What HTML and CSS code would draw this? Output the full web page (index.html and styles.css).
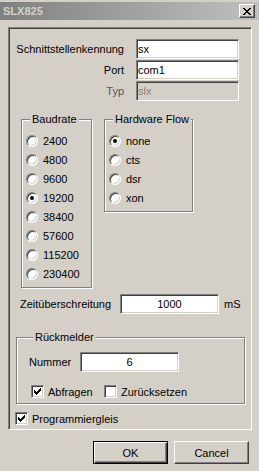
FILE: index.html
```html
<!DOCTYPE html>
<html lang="de">
<head>
    <meta charset="UTF-8">
    <title>SLX825</title>
    <link rel="stylesheet" href="styles.css">
</head>
<body>
    <div class="titlebar">
        <span class="title">SLX825</span>
        <span class="close">
            <svg width="8" height="7" viewBox="0 0 8 7" shape-rendering="crispEdges"><path d="M0 0h2v1h-2z M6 0h2v1h-2z M1 1h2v1h-2z M5 1h2v1h-2z M2 2h4v1h-4z M3 3h2v1h-2z M2 4h4v1h-4z M1 5h2v1h-2z M5 5h2v1h-2z M0 6h2v1h-2z M6 6h2v1h-2z" fill="#000"/></svg>
        </span>
    </div>

    <div class="panel">
        <div class="fields">
            <label class="lbl">Schnittstellenkennung</label>
            <input class="edit" type="text" value="sx">
            <label class="lbl">Port</label>
            <input class="edit" type="text" value="com1">
            <label class="lbl disabled">Typ</label>
            <input class="edit" type="text" value="slx" disabled>
        </div>

        <div class="groups">
            <fieldset class="group baud">
                <legend>Baudrate</legend>
                <div class="opt"><span class="radio"></span>2400</div>
                <div class="opt"><span class="radio"></span>4800</div>
                <div class="opt"><span class="radio"></span>9600</div>
                <div class="opt"><span class="radio on"></span>19200</div>
                <div class="opt"><span class="radio"></span>38400</div>
                <div class="opt"><span class="radio"></span>57600</div>
                <div class="opt"><span class="radio"></span>115200</div>
                <div class="opt"><span class="radio"></span>230400</div>
            </fieldset>
            <fieldset class="group flow">
                <legend>Hardware Flow</legend>
                <div class="opt"><span class="radio on"></span>none</div>
                <div class="opt"><span class="radio"></span>cts</div>
                <div class="opt"><span class="radio"></span>dsr</div>
                <div class="opt"><span class="radio"></span>xon</div>
            </fieldset>
        </div>

        <div class="timeout">
            <span class="timeout-lbl">Zeitüberschreitung</span>
            <input class="edit num" type="text" value="1000">
            <span class="unit">mS</span>
        </div>

        <fieldset class="group rm">
            <legend>Rückmelder</legend>
            <div class="rm-row">
                <span class="rm-lbl">Nummer</span>
                <input class="edit num" type="text" value="6">
            </div>
            <div class="rm-checks">
                <label class="check first"><span class="box on"><svg width="7" height="7" viewBox="0 0 7 7" shape-rendering="crispEdges"><path d="M6 0h1v1h-1z M5 1h2v1h-2z M0 2h1v1h-1z M4 2h3v1h-3z M0 3h2v1h-2z M3 3h3v1h-3z M0 4h5v1h-5z M1 5h3v1h-3z M2 6h1v1h-1z" fill="#000"/></svg></span>Abfragen</label>
                <label class="check"><span class="box"></span>Zurücksetzen</label>
            </div>
        </fieldset>

        <label class="check prog"><span class="box on"><svg width="7" height="7" viewBox="0 0 7 7" shape-rendering="crispEdges"><path d="M6 0h1v1h-1z M5 1h2v1h-2z M0 2h1v1h-1z M4 2h3v1h-3z M0 3h2v1h-2z M3 3h3v1h-3z M0 4h5v1h-5z M1 5h3v1h-3z M2 6h1v1h-1z" fill="#000"/></svg></span>Programmiergleis</label>
    </div>

    <div class="buttons">
        <button class="btn default">OK</button>
        <button class="btn">Cancel</button>
    </div>
</body>
</html>
```

FILE: styles.css
```css
* {
    box-sizing: border-box;
}

html, body {
    margin: 0;
    background-color: #d4d0c8;
}

body {
    width: 259px;
    height: 471px;
    overflow: hidden;
    font-family: "Liberation Sans", Arial, sans-serif;
    font-size: 11px;
    color: #000;
}

/* title bar */
.titlebar {
    display: flex;
    align-items: flex-start;
    height: 18px;
    margin-top: 2px;
    background: linear-gradient(to right, #808080, #c0c0c0);
}

.title {
    font-weight: bold;
    color: #d4d0c8;
    padding-left: 3px;
    line-height: 18px;
}

.close {
    display: flex;
    align-items: center;
    justify-content: center;
    width: 16px;
    height: 14px;
    margin: 2px 4px 0 auto;
    background-color: #d4d0c8;
    border: 1px solid;
    border-color: #fff #404040 #404040 #fff;
    box-shadow: inset -1px -1px #808080;
}

/* sunken panel */
.panel {
    height: 403px;
    margin: 7px 7px 0 8px;
    padding-top: 11px;
    border: 1px solid;
    border-color: #808080 #fff #fff #808080;
    box-shadow: inset 1px 1px #404040, inset -1px -1px #d4d0c8;
}

.fields {
    display: grid;
    grid-template-columns: 115px 103px;
    grid-auto-rows: 20px;
    column-gap: 12px;
    row-gap: 1px;
    align-items: center;
}

.lbl {
    text-align: right;
}

.lbl.disabled {
    color: #555;
}

.edit {
    height: 20px;
    margin: 0;
    padding: 0 1px;
    font: inherit;
    color: #000;
    background-color: #fff;
    border: 1px solid;
    border-color: #808080 #fff #fff #808080;
    box-shadow: inset 1px 1px #404040, inset -1px -1px #d4d0c8;
    outline: none;
}

.edit:disabled {
    background-color: #d4d0c8;
    color: #808080;
}

.edit.num {
    width: 99px;
    text-align: center;
}

/* group boxes */
.groups {
    display: flex;
    align-items: flex-start;
    gap: 12px;
    margin: 12px 0 0 12px;
}

.group {
    margin: 0;
    min-width: 0;
    border: 1px solid #808080;
    box-shadow: inset 1px 1px #fff, 1px 1px #fff;
}

.group legend {
    margin-left: 4px;
    padding: 0 2px;
    line-height: 13px;
    background-color: #d4d0c8;
}

.baud {
    width: 71px;
    padding: 5px 0 4px 4px;
}

.flow {
    width: 89px;
    padding: 5px 0 4px 4px;
}

.opt {
    display: flex;
    align-items: center;
    height: 19px;
}

.radio {
    display: flex;
    align-items: center;
    justify-content: center;
    width: 12px;
    height: 12px;
    margin-right: 5px;
    border-radius: 50%;
    background-color: #fff;
    border: 1px solid;
    border-color: #808080 #fff #fff #808080;
    box-shadow: inset 1px 1px #404040, inset -1px -1px #d4d0c8;
}

.radio.on::after {
    content: "";
    width: 4px;
    height: 4px;
    border-radius: 50%;
    background-color: #000;
}

/* timeout row */
.timeout {
    display: flex;
    align-items: center;
    height: 20px;
    margin: 6px 0 0 11px;
}

.timeout-lbl {
    width: 100px;
}

.unit {
    margin-left: 5px;
}

/* Rückmelder */
.rm {
    width: 229px;
    margin: 17px 0 0 7px;
    padding: 8px 0 5px 12px;
}

.rm-row {
    display: flex;
    align-items: center;
    height: 20px;
}

.rm-lbl {
    width: 51px;
}

.rm-checks {
    display: flex;
    margin: 13px 0 0 2px;
}

/* checkboxes */
.check {
    display: flex;
    align-items: center;
    height: 13px;
}

.check.first {
    width: 73px;
}

.box {
    display: flex;
    align-items: center;
    justify-content: center;
    width: 13px;
    height: 13px;
    margin-right: 4px;
    background-color: #fff;
    border: 1px solid;
    border-color: #808080 #fff #fff #808080;
    box-shadow: inset 1px 1px #404040, inset -1px -1px #d4d0c8;
}

.prog {
    margin: 8px 0 0 6px;
}

/* buttons */
.buttons {
    display: flex;
    justify-content: flex-end;
    gap: 6px;
    margin-top: 11px;
    padding-right: 10px;
}

.btn {
    width: 75px;
    height: 23px;
    padding: 0;
    font: inherit;
    color: #000;
    background-color: #d4d0c8;
    border: 1px solid;
    border-color: #fff #404040 #404040 #fff;
    box-shadow: inset -1px -1px #808080;
}

.btn.default {
    border-color: #000;
    box-shadow: inset 1px 1px #fff, inset -1px -1px #404040, inset -2px -2px #808080;
}
```
